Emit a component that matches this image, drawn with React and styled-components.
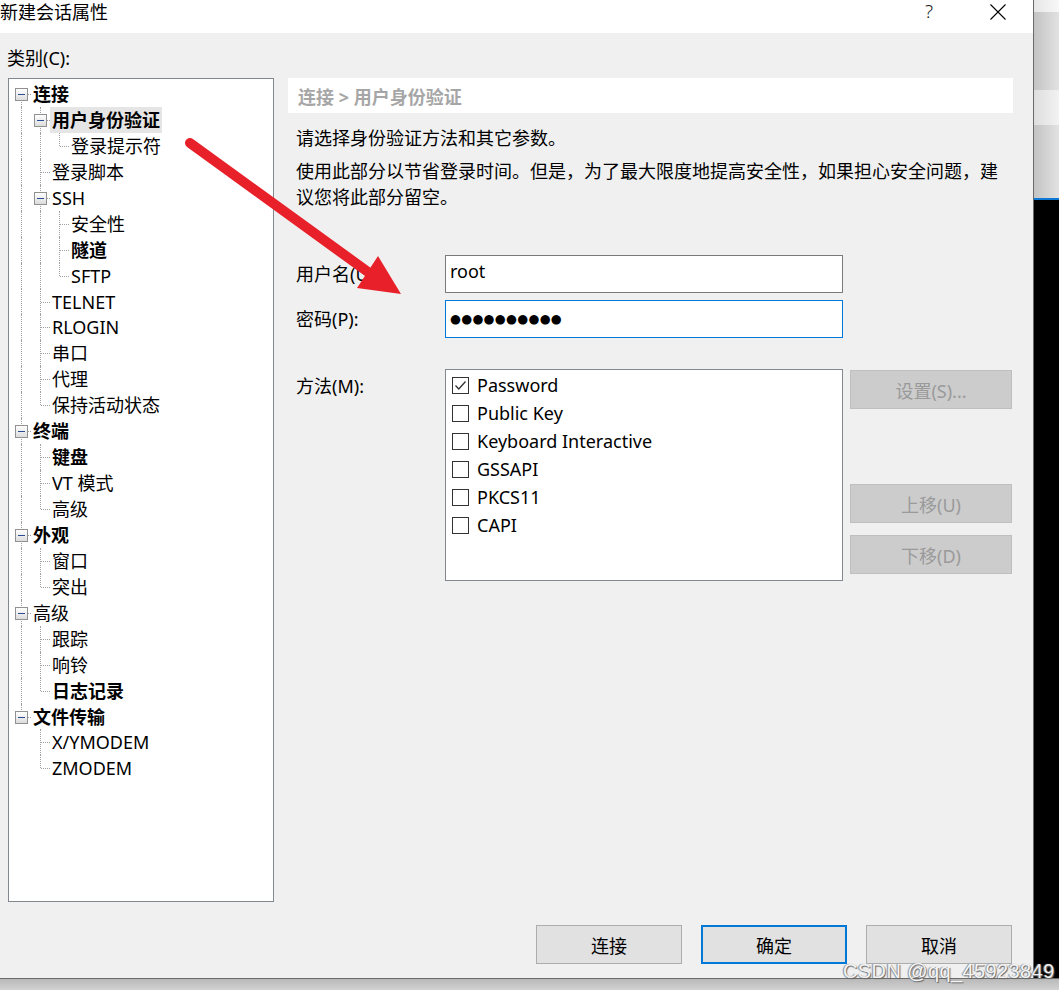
import React from "react";
import styled, { createGlobalStyle } from "styled-components";

const GlobalStyle = createGlobalStyle`
  html, body {
    margin: 0;
    padding: 0;
  }
  body {
    background: #f0f0f0;
    font-family: "Noto Sans", "Noto Sans CJK SC", sans-serif;
    color: #000;
  }
`;

const tree = [
  {
    label: "连接",
    bold: true,
    children: [
      { label: "用户身份验证", bold: true, selected: true, children: [{ label: "登录提示符" }] },
      { label: "登录脚本" },
      {
        label: "SSH",
        children: [{ label: "安全性" }, { label: "隧道", bold: true }, { label: "SFTP" }],
      },
      { label: "TELNET" },
      { label: "RLOGIN" },
      { label: "串口" },
      { label: "代理" },
      { label: "保持活动状态" },
    ],
  },
  {
    label: "终端",
    bold: true,
    children: [{ label: "键盘", bold: true }, { label: "VT 模式" }, { label: "高级" }],
  },
  { label: "外观", bold: true, children: [{ label: "窗口" }, { label: "突出" }] },
  {
    label: "高级",
    children: [{ label: "跟踪" }, { label: "响铃" }, { label: "日志记录", bold: true }],
  },
  { label: "文件传输", bold: true, children: [{ label: "X/YMODEM" }, { label: "ZMODEM" }] },
];

// flatten the tree into rows, remembering which ancestors were last
function flatten(nodes, trail = [], out = []) {
  nodes.forEach((node, i) => {
    const last = i === nodes.length - 1;
    out.push({ ...node, trail, last, first: trail.length === 0 && i === 0 });
    if (node.children) flatten(node.children, [...trail, last], out);
  });
  return out;
}

const rows = flatten(tree);

const methods = [
  { label: "Password", checked: true },
  { label: "Public Key" },
  { label: "Keyboard Interactive" },
  { label: "GSSAPI" },
  { label: "PKCS11" },
  { label: "CAPI" },
];

function App() {
  return (
    <>
      <GlobalStyle />
      <Screen>
        <Dialog>
          <TitleBar>
            <Title>新建会话属性</Title>
            <HelpButton>?</HelpButton>
            <CloseButton>
              <svg width="16" height="16" viewBox="0 0 16 16">
                <path d="M0.5 0.5 L15.5 15.5 M15.5 0.5 L0.5 15.5" stroke="#000" strokeWidth="1.1" />
              </svg>
            </CloseButton>
          </TitleBar>

          <Body>
            <CategoryLabel>类别(C):</CategoryLabel>
            <Main>
              <Tree>
                {rows.map((row, idx) => (
                  <TreeRow key={idx}>
                    {row.trail.map((parentLast, k) => (
                      <Guide key={k} $through={!parentLast} />
                    ))}
                    <Joint $top={!row.first} $bottom={!row.last}>
                      {row.children && <Expander />}
                    </Joint>
                    <NodeLabel $bold={row.bold} $selected={row.selected}>
                      {row.label}
                    </NodeLabel>
                  </TreeRow>
                ))}
              </Tree>

              <Panel>
                <Header>连接 &gt; 用户身份验证</Header>
                <Intro>请选择身份验证方法和其它参数。</Intro>
                <Paragraph>
                  使用此部分以节省登录时间。但是，为了最大限度地提高安全性，如果担心安全问题，建议您将此部分留空。
                </Paragraph>

                <FieldRow $gap={45}>
                  <FieldLabel>用户名(U):</FieldLabel>
                  <TextBox>root</TextBox>
                </FieldRow>
                <FieldRow $gap={7}>
                  <FieldLabel>密码(P):</FieldLabel>
                  <TextBox $focused>
                    <Dots>●●●●●●●●●●</Dots>
                  </TextBox>
                </FieldRow>

                <MethodRow>
                  <MethodLabel>方法(M):</MethodLabel>
                  <MethodList>
                    {methods.map((m) => (
                      <CheckRow key={m.label}>
                        <CheckBox>
                          {m.checked && (
                            <svg width="15" height="15" viewBox="0 0 15 15">
                              <polyline
                                points="2.5,7.5 5.8,11 12.5,3.5"
                                fill="none"
                                stroke="#333"
                                strokeWidth="1.3"
                              />
                            </svg>
                          )}
                        </CheckBox>
                        {m.label}
                      </CheckRow>
                    ))}
                  </MethodList>
                  <SideButtons>
                    <SideButton disabled $gap={1}>设置(S)...</SideButton>
                    <SideButton disabled $gap={75}>上移(U)</SideButton>
                    <SideButton disabled $gap={12}>下移(D)</SideButton>
                  </SideButtons>
                </MethodRow>
              </Panel>
            </Main>

            <Footer>
              <DialogButton>连接</DialogButton>
              <DialogButton $primary>确定</DialogButton>
              <DialogButton>取消</DialogButton>
            </Footer>
          </Body>
        </Dialog>

        <BackWindow>
          <Band $tone="top" $h={12} />
          <Band $tone="gray" $h={78} />
          <Band $tone="light" $h={35} />
          <Band $tone="gray" $h={73} />
          <Band $tone="blue" $h={2} />
          <Band $tone="black" $grow />
        </BackWindow>

        <BottomEdge />

        <Arrow width="1059" height="990" viewBox="0 0 1059 990">
          <line x1="190" y1="143" x2="368" y2="272" stroke="#e8202a" strokeWidth="10" strokeLinecap="round" />
          <polygon points="378,256 357,288 401,294" fill="#e8202a" />
        </Arrow>

        <Watermark>CSDN @qq_45923849</Watermark>
      </Screen>
    </>
  );
}

const Screen = styled.div`
  position: relative;
  width: 1059px;
  height: 990px;
  overflow: hidden;
  display: grid;
  grid-template-columns: 1033px 26px;
  grid-template-rows: 978px 12px;
`;

const Dialog = styled.div`
  display: flex;
  flex-direction: column;
  background: #f0f0f0;
`;

const TitleBar = styled.div`
  height: 33px;
  background: #fff;
  display: flex;
  align-items: flex-start;
  font-size: 18px;
`;

const Title = styled.div`
  line-height: 23px;
  font-family: "Noto Sans CJK SC", sans-serif;
`;

const HelpButton = styled.div`
  margin-left: auto;
  width: 46px;
  margin-right: 11px;
  text-align: center;
  line-height: 23px;
  font-size: 19px;
  font-family: "Noto Sans", sans-serif;
  font-weight: 300;
  color: #222;
`;

const CloseButton = styled.div`
  width: 70px;
  height: 22px;
  display: flex;
  align-items: center;
  justify-content: center;
  padding-top: 1px;
`;

const Body = styled.div`
  flex: 1;
  display: flex;
  flex-direction: column;
  padding: 12px 20px 0 8px;
  font-size: 18px;
`;

const CategoryLabel = styled.div`
  line-height: 26px;
  margin: 0 0 7px -1px;
`;

const Main = styled.div`
  display: grid;
  grid-template-columns: 266px 725px;
  column-gap: 14px;
  height: 824px;
`;

const Tree = styled.div`
  background: #fff;
  border: 1px solid #828790;
  padding: 2px 0 0 2px;
  box-sizing: border-box;
`;

const TreeRow = styled.div`
  display: flex;
  height: 25.95px;
`;

const Guide = styled.div`
  position: relative;
  width: 19px;
  flex: none;

  &::before {
    content: "";
    display: ${(p) => (p.$through ? "block" : "none")};
    position: absolute;
    left: 10px;
    top: 0;
    bottom: 0;
    border-left: 1px dotted #a0a0a0;
  }
`;

const Joint = styled.div`
  position: relative;
  width: 19px;
  flex: none;

  &::before {
    content: "";
    position: absolute;
    left: 10px;
    top: ${(p) => (p.$top ? "0" : "13px")};
    bottom: ${(p) => (p.$bottom ? "0" : "13px")};
    border-left: 1px dotted #a0a0a0;
  }

  &::after {
    content: "";
    position: absolute;
    left: 11px;
    right: -1px;
    top: 13px;
    border-top: 1px dotted #a0a0a0;
  }
`;

const Expander = styled.div`
  position: absolute;
  z-index: 1;
  left: 4px;
  top: 7px;
  width: 11px;
  height: 11px;
  border: 1px solid #919191;
  background: linear-gradient(#ffffff, #dcdcdc);

  &::after {
    content: "";
    position: absolute;
    left: 2px;
    right: 2px;
    top: 5px;
    height: 1px;
    background: #2b4b97;
  }
`;

const NodeLabel = styled.div`
  margin-left: 1px;
  padding: 0 2px;
  line-height: 26px;
  white-space: nowrap;
  font-weight: ${(p) => (p.$bold ? 700 : 400)};
  background: ${(p) => (p.$selected ? "#e5e5e5" : "transparent")};
`;

const Panel = styled.div`
  display: flex;
  flex-direction: column;
`;

const Header = styled.div`
  height: 35px;
  background: #fff;
  padding-left: 10px;
  display: flex;
  align-items: center;
  font-weight: 700;
  color: #a6a6a6;
`;

const Intro = styled.div`
  margin: 12px 8px 0;
  line-height: 26px;
`;

const Paragraph = styled.div`
  margin: 7px 8px 0;
  line-height: 26px;
`;

const FieldRow = styled.div`
  display: flex;
  align-items: center;
  margin: ${(p) => p.$gap}px 0 0 8px;
`;

const FieldLabel = styled.div`
  width: 149px;
  line-height: 26px;
`;

const TextBox = styled.div`
  width: 398px;
  height: 38px;
  box-sizing: border-box;
  background: #fff;
  border: 1px solid ${(p) => (p.$focused ? "#0078d7" : "#7a7a7a")};
  padding: 1px 4px 0;
  line-height: 28px;
`;

const Dots = styled.span`
  font-family: "DejaVu Sans", sans-serif;
  font-size: 12.5px;
  letter-spacing: 0.3px;
`;

const MethodRow = styled.div`
  display: flex;
  align-items: flex-start;
  margin: 31px 0 0 8px;
`;

const MethodLabel = styled.div`
  width: 149px;
  line-height: 26px;
  padding-top: 4px;
`;

const MethodList = styled.div`
  width: 398px;
  height: 212px;
  box-sizing: border-box;
  background: #fff;
  border: 1px solid #828790;
  padding: 1px 0 0 6px;
`;

const CheckRow = styled.div`
  display: flex;
  align-items: center;
  gap: 8px;
  height: 28px;
`;

const CheckBox = styled.span`
  width: 17px;
  height: 17px;
  box-sizing: border-box;
  border: 1px solid #333;
  background: #fff;
  display: flex;
  align-items: center;
  justify-content: center;
`;

const SideButtons = styled.div`
  display: flex;
  flex-direction: column;
  margin-left: 7px;
`;

const SideButton = styled.button`
  width: 162px;
  height: 39px;
  margin-top: ${(p) => p.$gap}px;
  box-sizing: border-box;
  background: #cccccc;
  border: 1px solid #bfbfbf;
  color: #9a9a9a;
  font: inherit;
  font-size: 18px;
  padding: 0;
`;

const Footer = styled.div`
  display: flex;
  justify-content: flex-end;
  gap: 19px;
  margin: 23px 1px 0 0;
`;

const DialogButton = styled.button`
  width: 146px;
  height: 39px;
  box-sizing: border-box;
  background: #e1e1e1;
  border: ${(p) => (p.$primary ? "2px solid #0078d7" : "1px solid #adadad")};
  color: #000;
  font: inherit;
  font-size: 18px;
  padding: 0;
`;

const BackWindow = styled.div`
  display: flex;
  flex-direction: column;
  border-left: 1px solid #6a6a6a;
`;

const bandColors = {
  top: "linear-gradient(90deg, #e6e6e6, #f8f8f8)",
  gray: "linear-gradient(90deg, #c3c3c3, #e2e2e2)",
  light: "linear-gradient(90deg, #dedede, #f2f2f2)",
  blue: "#0a78d4",
  black: "#000",
};

const Band = styled.div`
  height: ${(p) => (p.$grow ? "auto" : `${p.$h}px`)};
  flex: ${(p) => (p.$grow ? 1 : "none")};
  background: ${(p) => bandColors[p.$tone]};
`;

const BottomEdge = styled.div`
  grid-column: 1 / -1;
  border-top: 1px solid #6a6a6a;
  background: linear-gradient(#b9b9b9, #d2d2d2);
`;

const Arrow = styled.svg`
  position: absolute;
  left: 0;
  top: 0;
  pointer-events: none;
`;

const Watermark = styled.div`
  position: absolute;
  left: 843px;
  top: 960px;
  font-family: "Liberation Sans", sans-serif;
  font-size: 20px;
  letter-spacing: 0.4px;
  color: rgba(255, 255, 255, 0.92);
  text-shadow: 1px 1px 1px #666, -1px 0 1px #888;
  white-space: nowrap;
`;

export default App;
